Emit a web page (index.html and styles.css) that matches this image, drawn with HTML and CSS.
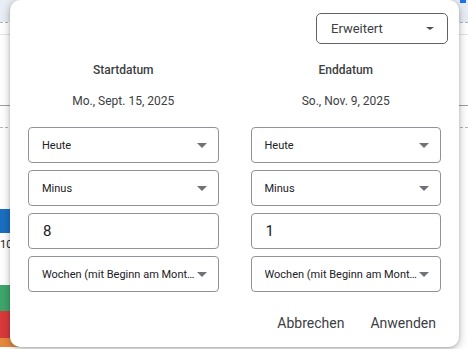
FILE: index.html
```html
<!DOCTYPE html>
<html lang="de">
<head>
<meta charset="utf-8">
<title>Datumsbereich</title>
<link rel="stylesheet" href="styles.css">
</head>
<body>
<div class="page">
  <div class="band-top"><span class="tab-mark"></span></div>
  <div class="rule dashed"></div>
  <div class="gap g11"></div>
  <div class="rule light"></div>
  <div class="gap g70"></div>
  <div class="rule dark"></div>
  <div class="gap g21"></div>
  <div class="rule dashed"></div>
  <div class="gap g81"></div>
  <div class="bar blue"></div>
  <div class="gap g6"></div>
  <div class="axis">10</div>
  <div class="gap g34"></div>
  <div class="bar green"></div>
  <div class="bar red"></div>
  <div class="bar orange"></div>
</div>

<div class="dialog">
  <div class="dialog-head">
    <div class="mode-select">
      <span class="mode-label">Erweitert</span>
      <span class="caret small"></span>
    </div>
  </div>
  <div class="columns">
    <div class="col">
      <div class="col-title">Startdatum</div>
      <div class="col-date">Mo., Sept. 15, 2025</div>
      <div class="fields">
        <div class="field"><span class="field-text">Heute</span><span class="caret"></span></div>
        <div class="field"><span class="field-text">Minus</span><span class="caret"></span></div>
        <div class="field input"><span class="field-num">8</span></div>
        <div class="field"><span class="field-text">Wochen (mit Beginn am Montag)</span><span class="caret"></span></div>
      </div>
    </div>
    <div class="col">
      <div class="col-title">Enddatum</div>
      <div class="col-date">So., Nov. 9, 2025</div>
      <div class="fields">
        <div class="field"><span class="field-text">Heute</span><span class="caret"></span></div>
        <div class="field"><span class="field-text">Minus</span><span class="caret"></span></div>
        <div class="field input"><span class="field-num">1</span></div>
        <div class="field"><span class="field-text">Wochen (mit Beginn am Montag)</span><span class="caret"></span></div>
      </div>
    </div>
  </div>
  <div class="actions">
    <button class="text-btn">Abbrechen</button>
    <button class="text-btn">Anwenden</button>
  </div>
</div>
</body>
</html>
```

FILE: styles.css
```css
* { box-sizing: border-box; }
html, body {
  margin: 0;
  padding: 0;
}
body {
  width: 468px;
  height: 349px;
  overflow: hidden;
  position: relative;
  background: #ffffff;
  font-family: Roboto, "Liberation Sans", Arial, sans-serif;
  color: #3c4043;
}

/* background page */
.page {
  display: flex;
  flex-direction: column;
  width: 468px;
  height: 349px;
}
.band-top {
  height: 22px;
  background: #e9eef6;
  display: flex;
  justify-content: flex-end;
  padding-right: 2px;
}
.tab-mark {
  width: 6px;
  height: 3px;
  background: #1a73e8;
}
.rule { height: 1px; flex: none; }
.rule.dashed {
  border-top: 1px dashed #b5b5b5;
}
.rule.light { background: #e3e3e3; }
.rule.dark { background: #9e9e9e; }
.gap { flex: none; }
.g6 { height: 6px; }
.g11 { height: 11px; }
.g21 { height: 21px; }
.g34 { height: 34px; }
.g70 { height: 70px; }
.g81 { height: 81px; }
.bar { flex: none; }
.bar.blue { height: 24px; width: 60px; background: #1b6fc2; }
.bar.green { height: 26px; width: 80px; background: #3ea66c; }
.bar.red { height: 27px; width: 80px; background: #d93a3b; }
.bar.orange { height: 9px; width: 370px; background: #e6893c; }
.axis {
  height: 12px;
  font-size: 11px;
  line-height: 12px;
  color: #202124;
}

/* dialog */
.dialog {
  position: absolute;
  left: 10px;
  top: 0;
  width: 449px;
  height: 347px;
  background: #ffffff;
  border-radius: 10px;
  box-shadow: 0 2px 10px rgba(0, 0, 0, 0.28), 0 1px 3px rgba(0, 0, 0, 0.15);
  display: flex;
  flex-direction: column;
}
.dialog-head {
  display: flex;
  justify-content: flex-end;
  padding: 13px 11px 0 0;
}
.mode-select {
  width: 132px;
  height: 31px;
  border: 1px solid #5f6368;
  border-radius: 5px;
  display: flex;
  align-items: center;
  padding: 0 13px 0 14px;
}
.mode-label {
  flex: 1;
  font-size: 13px;
  color: #3c4043;
}

.caret {
  flex: none;
  width: 0;
  height: 0;
  border-left: 5px solid transparent;
  border-right: 5px solid transparent;
  border-top: 5px solid #6f7276;
}
.caret.small {
  border-left-width: 4px;
  border-right-width: 4px;
  border-top-width: 3px;
  border-top-color: #4a4d51;
}

.columns {
  display: grid;
  grid-template-columns: 1fr 1fr;
  column-gap: 32px;
  padding: 0 18px;
  margin-top: 18px;
}
.col {
  display: flex;
  flex-direction: column;
  min-width: 0;
}
.col-title {
  text-align: center;
  font-size: 12px;
  line-height: 16px;
  font-weight: 500;
  color: #3c4043;
}
.col-date {
  text-align: center;
  font-size: 12px;
  line-height: 16px;
  margin-top: 15px;
  color: #3c4043;
}
.fields {
  margin-top: 18px;
  display: flex;
  flex-direction: column;
  gap: 7px;
}
.field {
  height: 36px;
  border: 1px solid #8f9397;
  border-radius: 4px;
  display: flex;
  align-items: center;
  padding: 0 11px 0 13px;
  gap: 2px;
}
.field-text {
  flex: 1;
  min-width: 0;
  font-size: 11px;
  color: #202124;
  white-space: nowrap;
  overflow: hidden;
  text-overflow: ellipsis;
}
.field-num {
  font-size: 15px;
  color: #202124;
  padding-left: 1px;
}

.actions {
  display: flex;
  justify-content: flex-end;
  gap: 10px;
  padding: 0 15px 0 0;
  margin-top: 13px;
}
.text-btn {
  height: 36px;
  padding: 0 8px;
  border: none;
  background: transparent;
  font-family: Roboto, "Liberation Sans", Arial, sans-serif;
  font-size: 14px;
  font-weight: 400;
  color: #3c4043;
}
```
